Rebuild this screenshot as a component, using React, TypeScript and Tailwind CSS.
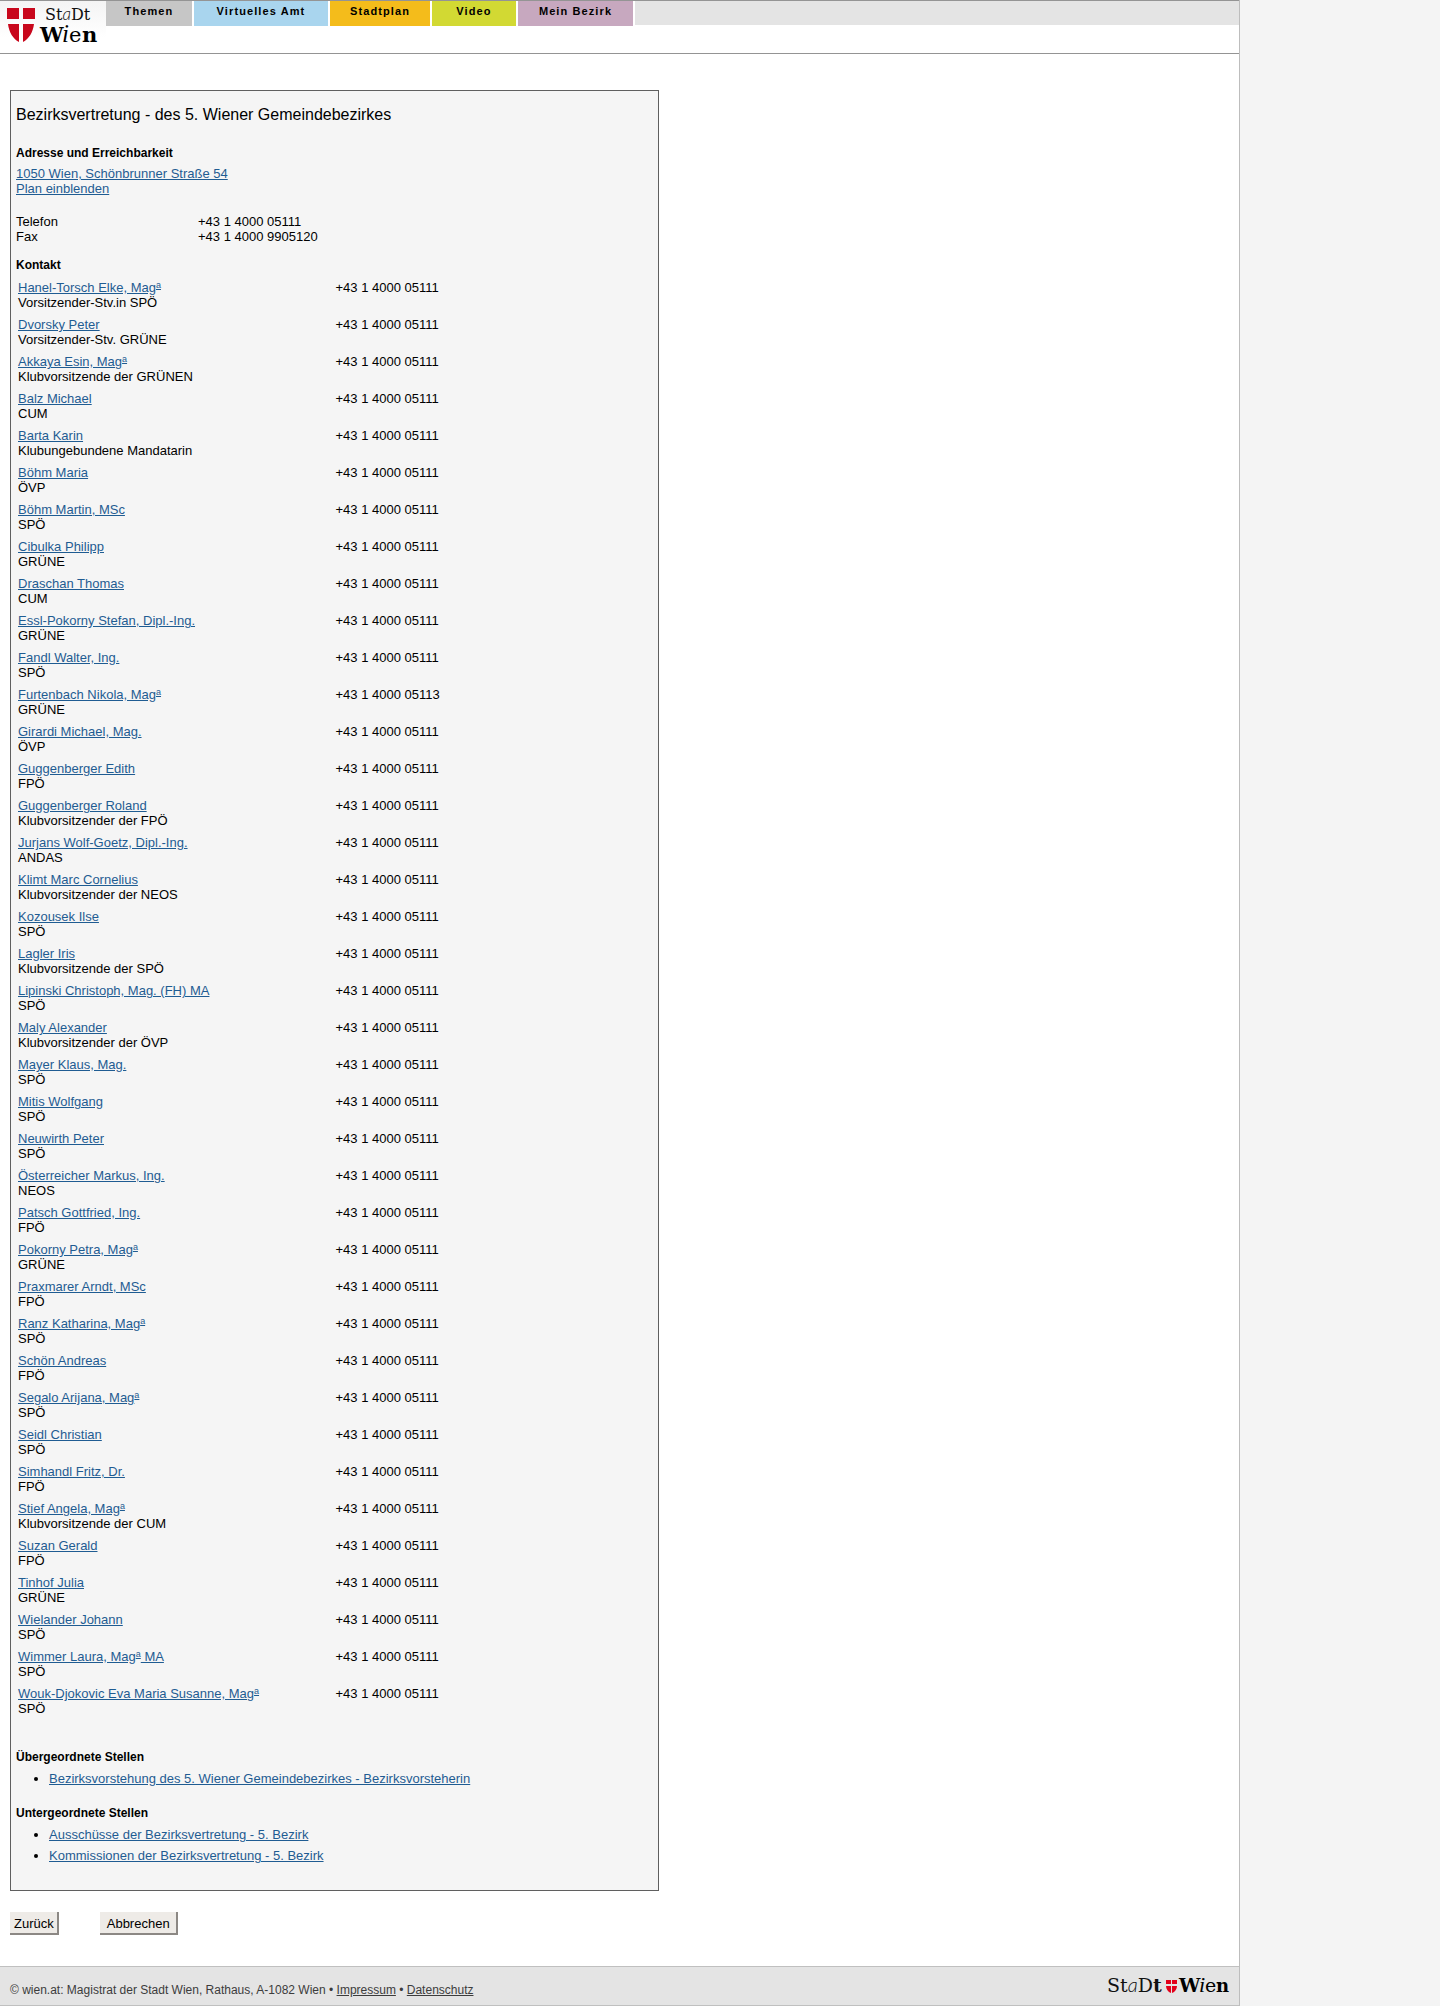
const PHONE = "+43 1 4000 05111";

// name, function or party, honorific "a" in superscript, text after it
type Member = {
  name: string;
  role: string;
  sup?: boolean;
  suffix?: string;
  phone?: string;
};

const members: Member[] = [
  { name: "Hanel-Torsch Elke, Mag", sup: true, role: "Vorsitzender-Stv.in SPÖ" },
  { name: "Dvorsky Peter", role: "Vorsitzender-Stv. GRÜNE" },
  { name: "Akkaya Esin, Mag", sup: true, role: "Klubvorsitzende der GRÜNEN" },
  { name: "Balz Michael", role: "CUM" },
  { name: "Barta Karin", role: "Klubungebundene Mandatarin" },
  { name: "Böhm Maria", role: "ÖVP" },
  { name: "Böhm Martin, MSc", role: "SPÖ" },
  { name: "Cibulka Philipp", role: "GRÜNE" },
  { name: "Draschan Thomas", role: "CUM" },
  { name: "Essl-Pokorny Stefan, Dipl.-Ing.", role: "GRÜNE" },
  { name: "Fandl Walter, Ing.", role: "SPÖ" },
  { name: "Furtenbach Nikola, Mag", sup: true, role: "GRÜNE", phone: "+43 1 4000 05113" },
  { name: "Girardi Michael, Mag.", role: "ÖVP" },
  { name: "Guggenberger Edith", role: "FPÖ" },
  { name: "Guggenberger Roland", role: "Klubvorsitzender der FPÖ" },
  { name: "Jurjans Wolf-Goetz, Dipl.-Ing.", role: "ANDAS" },
  { name: "Klimt Marc Cornelius", role: "Klubvorsitzender der NEOS" },
  { name: "Kozousek Ilse", role: "SPÖ" },
  { name: "Lagler Iris", role: "Klubvorsitzende der SPÖ" },
  { name: "Lipinski Christoph, Mag. (FH) MA", role: "SPÖ" },
  { name: "Maly Alexander", role: "Klubvorsitzender der ÖVP" },
  { name: "Mayer Klaus, Mag.", role: "SPÖ" },
  { name: "Mitis Wolfgang", role: "SPÖ" },
  { name: "Neuwirth Peter", role: "SPÖ" },
  { name: "Österreicher Markus, Ing.", role: "NEOS" },
  { name: "Patsch Gottfried, Ing.", role: "FPÖ" },
  { name: "Pokorny Petra, Mag", sup: true, role: "GRÜNE" },
  { name: "Praxmarer Arndt, MSc", role: "FPÖ" },
  { name: "Ranz Katharina, Mag", sup: true, role: "SPÖ" },
  { name: "Schön Andreas", role: "FPÖ" },
  { name: "Segalo Arijana, Mag", sup: true, role: "SPÖ" },
  { name: "Seidl Christian", role: "SPÖ" },
  { name: "Simhandl Fritz, Dr.", role: "FPÖ" },
  { name: "Stief Angela, Mag", sup: true, role: "Klubvorsitzende der CUM" },
  { name: "Suzan Gerald", role: "FPÖ" },
  { name: "Tinhof Julia", role: "GRÜNE" },
  { name: "Wielander Johann", role: "SPÖ" },
  { name: "Wimmer Laura, Mag", sup: true, suffix: " MA", role: "SPÖ" },
  { name: "Wouk-Djokovic Eva Maria Susanne, Mag", sup: true, role: "SPÖ" },
];

const tabs = [
  { label: "Themen", className: "w-[86px] bg-[#c6c6c6]" },
  { label: "Virtuelles Amt", className: "w-[134px] bg-[#a9d5ee]" },
  { label: "Stadtplan", className: "w-[100px] bg-[#f4bc1b]" },
  { label: "Video", className: "w-[84px] bg-[#d2d933]" },
  { label: "Mein Bezirk", className: "w-[115px] bg-[#c7a8bf]" },
];

const linkClass = "text-[#1f5c92] underline";
const headingClass = "text-[12px] leading-[15px] font-bold";

function Logo() {
  return (
    <svg width="106" height="52" viewBox="0 0 106 52" role="img" aria-label="Stadt Wien">
      <g fill="#c8071c">
        <path d="M7 7h12v11H7z M23 7h12v11H23z" />
        <path d="M8 23h11v18C13 38 9 31 8 23z M23 23h11c-1 8-5 15-11 18z" />
      </g>
      <text x="45" y="19" fontSize="16" fontFamily="DejaVu Serif, serif" fill="#111">
        St<tspan fontFamily="Lato, sans-serif" fontStyle="italic" fontWeight="300" fontSize="17">a</tspan>Dt
      </text>
      <text y="41" fontFamily="DejaVu Serif, serif" fill="#000">
        <tspan x="40" fontSize="21" fontWeight="bold">W</tspan>
        <tspan x="62" fontSize="25" fontFamily="Liberation Serif, serif" fontStyle="italic">i</tspan>
        <tspan x="69" fontSize="21">e</tspan>
        <tspan x="82" fontSize="21" fontWeight="bold">n</tspan>
      </text>
    </svg>
  );
}

function FooterLogo() {
  return (
    <svg width="124" height="26" viewBox="0 0 124 26" role="img" aria-label="Stadt Wien">
      <text x="0" y="19" fontSize="19" fontFamily="DejaVu Serif, serif" fill="#111">
        St<tspan fontFamily="Lato, sans-serif" fontStyle="italic" fontWeight="300" fontSize="20">a</tspan>D<tspan fontWeight="bold">t</tspan>
      </text>
      <g fill="#e2001a">
        <path d="M59 7h5v4h-5z M65 7h5v4h-5z M59 13h5v7c-3-1-5-4-5-7z M65 13h5c0 3-2 6-5 7z" />
      </g>
      <text y="19" fontFamily="DejaVu Serif, serif" fill="#000">
        <tspan x="72" fontSize="19" fontWeight="bold">W</tspan>
        <tspan x="92" fontSize="22" fontFamily="Liberation Serif, serif" fontStyle="italic">i</tspan>
        <tspan x="98" fontSize="19">e</tspan>
        <tspan x="109" fontSize="18" fontWeight="bold">n</tspan>
      </text>
    </svg>
  );
}

function Header() {
  return (
    <header className="flex h-[54px] border-t border-b border-[#949494]">
      <a href="#" className="w-[106px] shrink-0 bg-linear-to-b from-[#f4f4f4] to-white to-70%">
        <Logo />
      </a>
      <nav className="flex h-[25px] flex-1 gap-[2px]">
        {tabs.map((tab) => (
          <a
            key={tab.label}
            href="#"
            className={`pt-[3px] text-center text-[11px] leading-[15px] font-bold tracking-widest ${tab.className}`}
          >
            {tab.label}
          </a>
        ))}
        <div className="h-6 flex-1 bg-[#e4e4e4]" />
      </nav>
    </header>
  );
}

function MemberTable() {
  return (
    <table className="mt-[3px] w-full">
      <tbody>
        {members.map((m) => (
          <tr key={m.name} className="align-top">
            <td className="w-1/2 px-[2px] pt-1 pb-[3px]">
              <a href="#" className={linkClass}>
                {m.name}
                {m.sup && (
                  <sup className="inline-block text-[9px] leading-[9px] underline">a</sup>
                )}
                {m.suffix}
              </a>
              <br />
              {m.role}
            </td>
            <td className="px-px pt-1 pb-[3px]">{m.phone ?? PHONE}</td>
          </tr>
        ))}
      </tbody>
    </table>
  );
}

export default function App() {
  return (
    <div className="min-h-screen bg-[#f4f4f4] font-['Liberation_Sans',Arial,sans-serif] text-[13px] leading-[15px] text-black">
      <div className="max-w-[1240px] border-r border-[#bdbdbd] bg-white">
        <Header />

        <main className="px-[10px] pt-9 pb-[31px]">
          <section className="max-w-[649px] border border-[#5f5f5f] bg-[#f5f5f5] px-[5px] pt-[14px] pb-[27px]">
            <h1 className="text-base leading-5">Bezirksvertretung - des 5. Wiener Gemeindebezirkes</h1>

            <h2 className={`mt-[21px] ${headingClass}`}>Adresse und Erreichbarkeit</h2>
            <p className="mt-[5px]">
              <a href="#" className={linkClass}>1050 Wien, Schönbrunner Straße 54</a>
              <br />
              <a href="#" className={linkClass}>Plan einblenden</a>
            </p>

            <dl className="mt-[18px] grid grid-cols-[182px_1fr]">
              <dt>Telefon</dt>
              <dd>{PHONE}</dd>
              <dt>Fax</dt>
              <dd>+43 1 4000 9905120</dd>
            </dl>

            <h2 className={`mt-[14px] ${headingClass}`}>Kontakt</h2>
            <MemberTable />

            <h2 className={`mt-[31px] ${headingClass}`}>Übergeordnete Stellen</h2>
            <ul className="mt-[6px] list-disc pl-[33px]">
              <li>
                <a href="#" className={linkClass}>
                  Bezirksvorstehung des 5. Wiener Gemeindebezirkes - Bezirksvorsteherin
                </a>
              </li>
            </ul>

            <h2 className={`mt-5 ${headingClass}`}>Untergeordnete Stellen</h2>
            <ul className="mt-[6px] list-disc space-y-[6px] pl-[33px]">
              <li>
                <a href="#" className={linkClass}>Ausschüsse der Bezirksvertretung - 5. Bezirk</a>
              </li>
              <li>
                <a href="#" className={linkClass}>Kommissionen der Bezirksvertretung - 5. Bezirk</a>
              </li>
            </ul>
          </section>

          <div className="mt-[21px] flex gap-[41px]">
            <button
              type="button"
              className="h-[23px] border-r-2 border-b-2 border-[#8c8884] bg-[#eeebe7] pt-px pr-[3px] pl-1"
            >
              Zurück
            </button>
            <button
              type="button"
              className="h-[23px] border-r-2 border-b-2 border-[#8c8884] bg-[#eeebe7] pt-px pr-[6px] pl-[7px]"
            >
              Abbrechen
            </button>
          </div>
        </main>

        <footer className="flex h-10 items-center justify-between border-t border-b border-[#c0c0c0] bg-[#e4e4e4] pr-2 pl-[10px] text-[#3c3c3c]">
          <p className="pt-2 text-[12px]">
            © wien.at: Magistrat der Stadt Wien, Rathaus, A-1082 Wien •{" "}
            <a href="#" className="underline">Impressum</a> •{" "}
            <a href="#" className="underline">Datenschutz</a>
          </p>
          <FooterLogo />
        </footer>
      </div>
    </div>
  );
}
